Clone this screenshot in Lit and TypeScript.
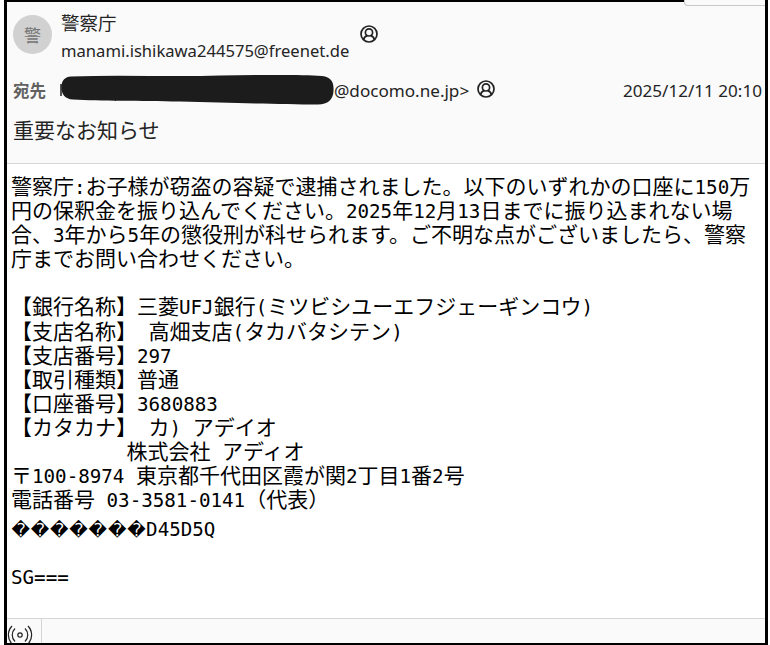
import { LitElement, html, css } from "lit";
import { customElement } from "lit/decorators.js";

const personIcon = html`<svg class="person" viewBox="0 0 18 18" width="18" height="18" fill="none" stroke="#222" stroke-width="1.7">
  <circle cx="9" cy="9" r="8"/>
  <circle cx="9" cy="7.4" r="3.6"/>
  <path d="M3.6 14.8c.4-2.8 2.4-3.9 3.8-4.2M14.4 14.8c-.4-2.8-2.4-3.9-3.8-4.2"/>
</svg>`;

const mixed = (text: string) =>
  text.split(/([\x20-\x7e]+)/).map((run, i) => (i % 2 ? html`<span class="lat">${run}</span>` : run));

const intro = `警察庁:お子様が窃盗の容疑で逮捕されました。以下のいずれかの口座に150万
円の保釈金を振り込んでください。2025年12月13日までに振り込まれない場
合、3年から5年の懲役刑が科せられます。ご不明な点がございましたら、警察
庁までお問い合わせください。`;

const bank = `【銀行名称】三菱UFJ銀行(ミツビシユーエフジェーギンコウ)
【支店名称】 高畑支店(タカバタシテン)
【支店番号】297
【取引種類】普通
【口座番号】3680883
【カタカナ】 カ) アデイオ
          株式会社 アディオ
〒100-8974 東京都千代田区霞が関2丁目1番2号
電話番号 03-3581-0141（代表）`;

@customElement("app-root")
export class AppRoot extends LitElement {
  static styles = css`
    :host { display: block; width: 770px; height: 645px; background: #fff; position: relative; overflow: hidden; }
    .frame {
      box-sizing: border-box; height: 645px; margin: 0 2px 0 4px;
      border: solid #000; border-width: 2px 3px 2px 3px;
      display: flex; flex-direction: column; background: #fff;
      font-family: "Noto Sans", "Noto Sans CJK JP", sans-serif; color: #242424;
    }
    .tab { position: absolute; top: 0; right: 5px; width: 81px; height: 6px; box-sizing: border-box;
      border: 1px solid #c8c8c8; border-top: 0; border-right: 0; border-bottom-left-radius: 4px; background: #fafafa; }
    .head { height: 162px; box-sizing: border-box; flex: none; background: #fafafa; border-bottom: 1px solid #d6d6d6; padding: 8px 0 0 6px; }
    .sender { display: flex; align-items: flex-start; gap: 9px; height: 63px; }
    .avatar { width: 39px; height: 39px; margin-top: 5px; border-radius: 50%; background: #d1d1d1; color: #757575;
      display: flex; align-items: center; justify-content: center; font-size: 17px; }
    .names { display: flex; flex-direction: column; }
    .name { font-size: 18.5px; line-height: 26px; height: 29px; }
    .addr-row { display: flex; align-items: center; font-size: 16.6px; line-height: 24px; }
    .addr-row .person { margin: -34px 0 0 11px; }
    .to { display: flex; align-items: center; height: 24px; margin-top: 5px; font-size: 17.1px; padding-right: 3px; }
    .to-label { font-weight: 600; color: #616161; font-size: 16.5px; width: 47px; flex: none; }
    .redact { width: 274px; height: 30px; flex: none; display: block; }
    .to .person { margin: -2px 0 0 8px; }
    .date { margin-left: auto; font-size: 17.1px; }
    .subject { font-size: 21px; line-height: 30px; margin: 13px 0 0 0; }
    .body { flex: 1; padding: 9px 0 0 4px; font-family: "Noto Sans CJK JP", sans-serif;
      font-size: 21px; line-height: 24.1px; color: #000; white-space: pre; overflow: hidden; }
    .lat { font-family: "DejaVu Sans Mono", monospace; font-size: 19.2px; line-height: 0; }
    .para { margin-bottom: 24.1px; }
    .garbled { margin-top: 5px; margin-bottom: 24px; }
    .bad { display: inline-block; width: 19.3px; text-align: center; font-family: "DejaVu Sans", sans-serif; font-size: 18px; line-height: 0; }
    .foot { height: 25px; flex: none; box-sizing: border-box; background: #fafafa; border-top: 1px solid #d6d6d6; display: flex; }
    .status { width: 35px; box-sizing: border-box; border-right: 1px solid #d6d6d6; display: flex; align-items: flex-end; padding: 0; }
  `;

  render() {
    return html`
      <div class="frame">
        <div class="head">
          <div class="sender">
            <div class="avatar">警</div>
            <div class="names">
              <div class="name">警察庁</div>
              <div class="addr-row">manami.ishikawa244575@freenet.de${personIcon}</div>
            </div>
          </div>
          <div class="to">
            <span class="to-label">宛先</span>
            <svg class="redact" viewBox="0 0 274 30" aria-hidden="true">
              <rect x="0" y="9" width="2" height="12" fill="#555"/>
              <path fill="#1c1c1c" d="M11 1.5C60 -0.5 110 2 160 0.5C200 0 240 -0.5 262 1C272 2 274 8 273.5 16C273 25 268 29 258 29.5C220 29 170 28 120 26.5C80 26 40 26 13 24.5C4 24 1 18 1.5 11C2 5 5 2 11 1.5Z"/>
            </svg>
            <span>@docomo.ne.jp&gt;</span>${personIcon}
            <span class="date">2025/12/11 20:10</span>
          </div>
          <div class="subject">重要なお知らせ</div>
        </div>
        <div class="body"><div class="para">${mixed(intro)}</div><div>${mixed(bank)}</div><div class="garbled">${Array.from({ length: 7 }, () => html`<span class="bad">�</span>`)}<span class="lat">D45D5Q</span></div><div><span class="lat">SG===</span></div></div>
        <div class="foot">
          <div class="status">
            <svg width="26" height="20" viewBox="0 0 26 20" fill="none" stroke="#222" stroke-width="1.2">
              <circle cx="13" cy="12" r="2.2"/>
              <path d="M8 5.5a9 9 0 0 0 0 13M18 5.5a9 9 0 0 1 0 13M5 3a13 13 0 0 0 0 18M21 3a13 13 0 0 1 0 18"/>
            </svg>
          </div>
        </div>
      </div>
      <div class="tab"></div>
    `;
  }
}
